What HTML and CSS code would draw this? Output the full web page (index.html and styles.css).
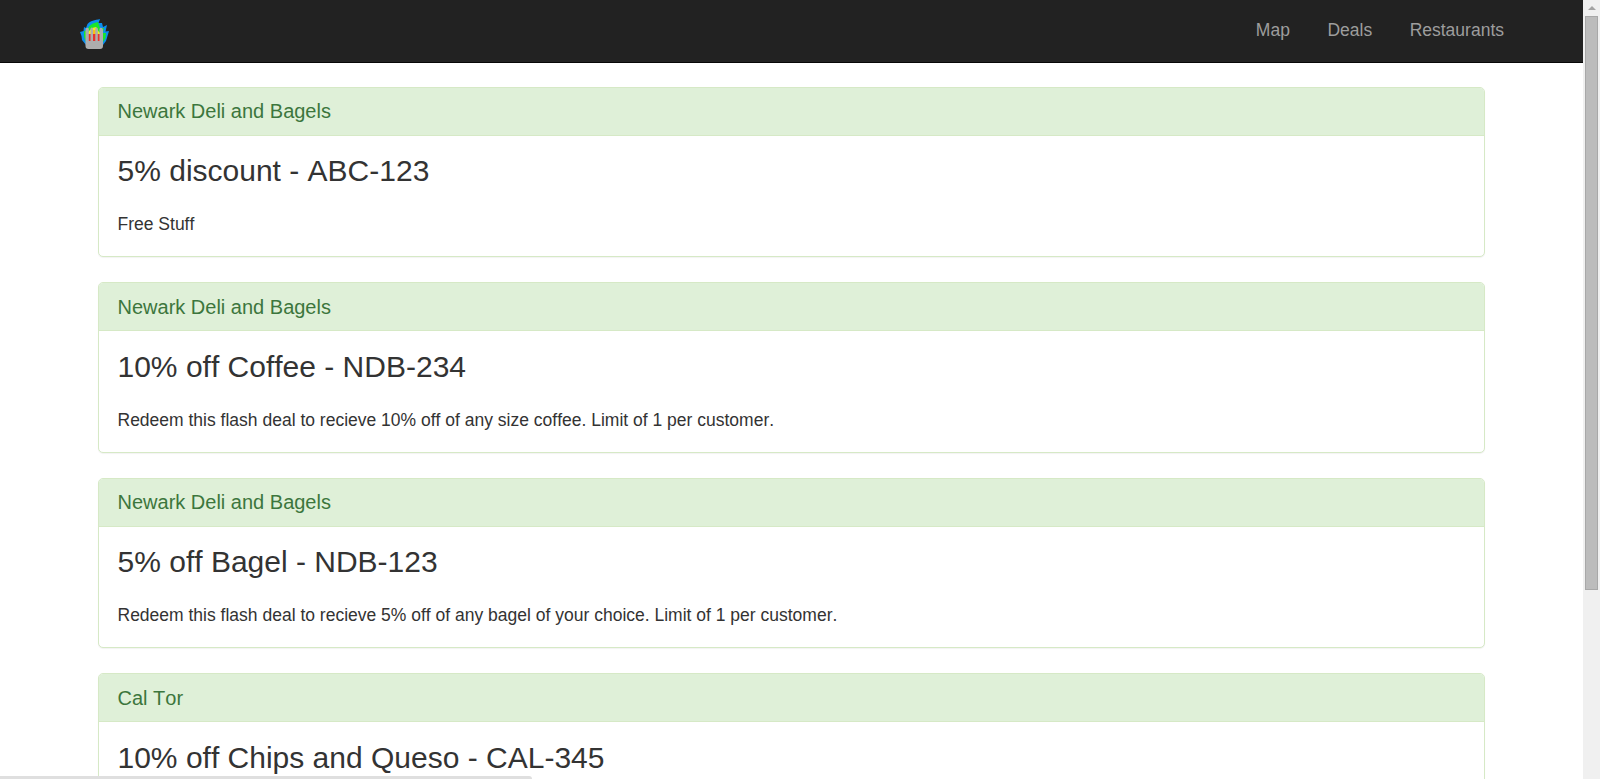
FILE: index.html
```
<!DOCTYPE html>
<html lang="en">
<head>
  <meta charset="UTF-8" />
  <meta name="viewport" content="width=device-width, initial-scale=1.0"/>
  <title>Deals</title>
  <link rel="stylesheet" href="styles.css">
</head>
<body>

  <div class="page">
    <!-- Navbar -->
    <nav class="navbar">
      <div class="container navbar-inner">
        <a class="navbar-brand" href="#">
          <svg width="31" height="32" viewBox="0 0 31 32">
            <path fill="#0a8ef0" d="M21 1C16 2 11 3 8.500 6L7 10L5 9L4.500 13L1 14L2.500 18L3 22L7 27H24L27 23L30 13L26.500 13.500L28 7L24 9L23 5L19.500 5Z"/>
            <path fill="#19e52b" d="M19 4C14 5 10 7 9 11L5 13.500L5 19L7 24H24L26.500 20L27 15L24 15L25 10L21 10L20 7Z"/>
            <path fill="#f6ee19" d="M17 9L13 10L10 13L7 18L10 24H22L24 17L20 14Z"/>
            <path fill="#e8322c" d="M9 16H22V25H9Z"/>
            <path fill="#f6c219" d="M13 12H17V16H13Z"/>
            <path fill="#adadad" d="M6.500 12Q6.500 10 7.500 10Q9.500 9 9.800 11V23H11.500V10.500Q12.800 8.500 14 10.500V23H16.300V10.500Q17.500 8.500 18.800 10.500V23H20.500V11Q21 9 23 10Q24 10.500 24 13V28Q24 31 21 31H9.500Q6.500 31 6.500 28Z"/>
          </svg>
        </a>
        <ul class="nav">
          <li><a href="#">Map</a></li>
          <li><a href="#">Deals</a></li>
          <li><a href="#">Restaurants</a></li>
        </ul>
      </div>
    </nav>

    <!-- Deals -->
    <div class="container deals">
      <div class="panel">
        <div class="panel-heading">Newark Deli and Bagels</div>
        <div class="panel-body">
          <h3>5% discount - ABC-123</h3>
          <p>Free Stuff</p>
        </div>
      </div>

      <div class="panel">
        <div class="panel-heading">Newark Deli and Bagels</div>
        <div class="panel-body">
          <h3>10% off Coffee - NDB-234</h3>
          <p>Redeem this flash deal to recieve 10% off of any size coffee. Limit of 1 per customer.</p>
        </div>
      </div>

      <div class="panel">
        <div class="panel-heading">Newark Deli and Bagels</div>
        <div class="panel-body">
          <h3>5% off Bagel - NDB-123</h3>
          <p>Redeem this flash deal to recieve 5% off of any bagel of your choice. Limit of 1 per customer.</p>
        </div>
      </div>

      <div class="panel">
        <div class="panel-heading">Cal Tor</div>
        <div class="panel-body">
          <h3>10% off Chips and Queso - CAL-345</h3>
        </div>
      </div>
    </div>
  </div>

  <div class="scrollbar">
    <div class="scroll-arrow"></div>
    <div class="scroll-thumb"></div>
  </div>

  <div class="status-bar"></div>

</body>
</html>
```

FILE: styles.css
```
* {
  box-sizing: border-box;
}

body {
  margin: 0;
  display: flex;
  height: 100vh;
  overflow: hidden;
  background: #fff;
  color: #333;
  font-family: "Liberation Sans", Arial, sans-serif;
  font-size: 17.5px;
  font-kerning: none;
  line-height: 25px;
}

.page {
  flex: 1;
  overflow: hidden;
}

.container {
  width: 1462.5px;
  margin: 0 auto;
  padding: 0 18.75px;
}

/* navbar */
.navbar {
  height: 63px;
  background: #222;
  border-bottom: 1px solid #080808;
}

.navbar-inner {
  display: flex;
  justify-content: space-between;
  padding-right: 0;
}

.navbar-brand {
  padding-top: 18px;
}

.navbar-brand svg {
  display: block;
}

.nav {
  display: flex;
  margin: 0;
  padding: 0;
  list-style: none;
}

.nav a {
  display: block;
  padding: 17.75px 18.75px;
  color: #9d9d9d;
  text-decoration: none;
}

.nav a:hover {
  color: #fff;
}

/* deals */
.deals {
  padding: 23.9px 37.5px 0;
}

.panel {
  margin-bottom: 25px;
  background: #fff;
  border: 1px solid #d6e9c6;
  border-radius: 5px;
  box-shadow: 0 1px 1px rgba(0, 0, 0, 0.05);
}

.panel-heading {
  padding: 12.45px 18.75px;
  background: #dff0d8;
  border-bottom: 1px solid #d6e9c6;
  border-radius: 4px 4px 0 0;
  color: #3c763d;
  font-size: 20px;
  line-height: 22px;
}

.panel-body {
  padding: 18.55px 18.75px 19px;
}

.panel-body h3 {
  margin: 0 0 25px;
  font-size: 30px;
  font-weight: 500;
  line-height: 33px;
}

.panel-body p {
  margin: 0;
}

/* scrollbar */
.scrollbar {
  display: flex;
  flex-direction: column;
  align-items: center;
  width: 17px;
  padding-top: 6px;
  background: #f0f0f0;
}

.scroll-arrow {
  border: 4px solid transparent;
  border-top: 0;
  border-bottom-color: #a3a3a3;
}

.scroll-thumb {
  width: 13px;
  height: 574px;
  margin-top: 6px;
  background: #bcbcbc;
  border: 1px solid #a8a8a8;
}

.status-bar {
  position: absolute;
  left: 0;
  bottom: 0;
  width: 532px;
  height: 3px;
  background: #dfdfdf;
  border-top-right-radius: 3px;
}
```
